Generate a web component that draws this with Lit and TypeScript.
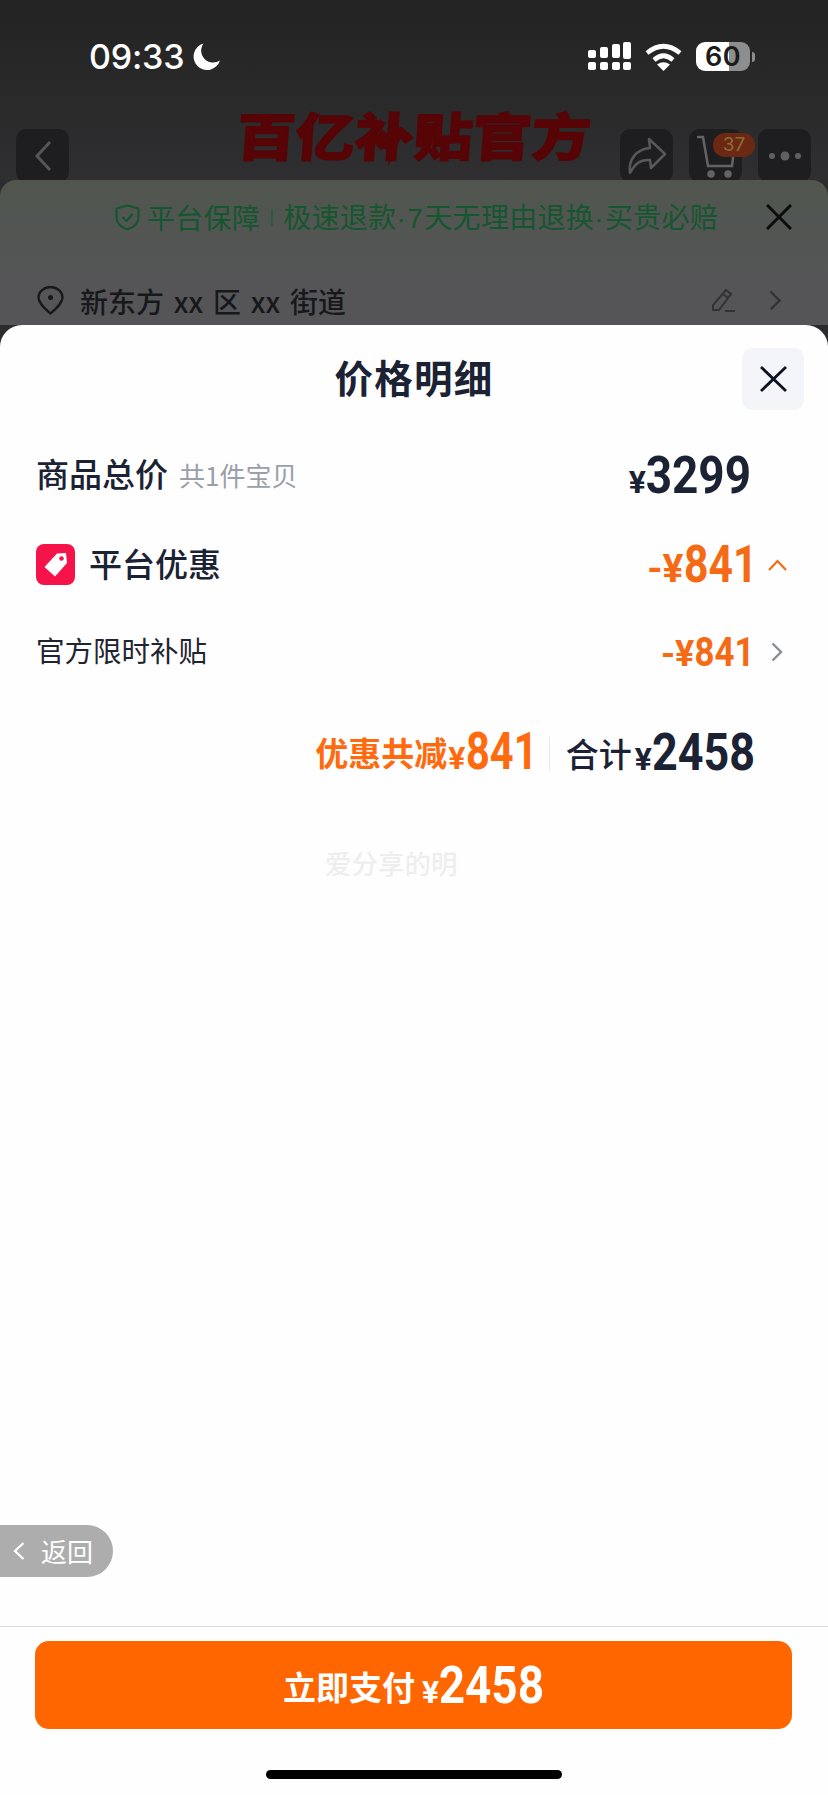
import { LitElement, html, css } from "lit";
import { customElement } from "lit/decorators.js";

@customElement("app-root")
export class AppRoot extends LitElement {
  static styles = css`
    :host { display: block; width: 828px; height: 1795px; position: relative; overflow: hidden;
      font-family: "Noto Sans CJK SC", "Liberation Sans", sans-serif; background: #2c2c2e; }
    svg { display: block; flex: none; }
    .top { height: 180px; overflow: hidden; background: linear-gradient(#232323, #2f2f31); }
    .status { height: 129px; box-sizing: border-box; padding: 42px 73px 0 89px; display: flex; justify-content: space-between; align-items: flex-start; color: #fff; }
    .left { display: flex; align-items: center; gap: 9px; height: 29px; }
    .time { font: 500 34px/29px Inter, sans-serif; letter-spacing: -0.2px; }
    .right { display: flex; align-items: center; }
    .wifi { margin-left: 14px; }
    .battery { margin-left: 14px; display: flex; align-items: center; gap: 2px; }
    .batt { width: 54px; height: 29px; border-radius: 9px; background: linear-gradient(90deg, #fff 61%, #8e8e8e 61%);
      color: #1b1b1b; font: 600 27px/29px Inter, sans-serif; text-align: center; letter-spacing: 0.5px; }
    .nub { width: 3px; height: 10px; border-radius: 0 3px 3px 0; background: #8e8e8e; }
    .nav { display: grid; grid-template-columns: 1fr auto 1fr; padding: 0 17px 0 16px; align-items: start; }
    .nbtn { width: 53px; height: 53px; border-radius: 10px; background: #1e1e20; display: flex; align-items: center; justify-content: center; position: relative; }
    .nav-right { display: flex; gap: 16px; justify-content: flex-end; }
    .logo { position: relative; margin-top: -26px; width: 354px; height: 62px; color: #560406; font: 900 59px/62px "Noto Sans CJK SC", sans-serif; white-space: nowrap; text-align: center; }
    .logo span { display: block; transform: skewX(-4deg) scaleY(0.87); -webkit-text-stroke: 1.5px #560406; }
    .bolt { position: absolute; left: 146px; top: 34px; }
    .badge { position: absolute; left: 24px; top: 4px; width: 42px; height: 24px; border-radius: 12px; background: #6b2812; color: #8d6a3a; font: 400 19px/24px Inter, sans-serif; text-align: center; }
    .under { height: 145px; border-radius: 16px 16px 0 0; overflow: hidden; background: linear-gradient(#50564e, #555557 70%); }
    .notice { height: 74px; display: flex; align-items: center; padding: 0 36px 0 115px; color: #14562f; font-size: 28px; line-height: 1; white-space: nowrap; letter-spacing: 0.3px; }
    .notice .shield { margin-right: 7px; }
    .bar { width: 2px; height: 17px; background: #2a5c40; margin: 0 10px 0 11px; }
    .dot { font-family: "Liberation Sans", sans-serif; letter-spacing: 1.5px; }
    .notice .x { margin-left: auto; }
    .addr { height: 71px; box-sizing: border-box; display: flex; align-items: center; padding: 22px 47px 0 37px; color: #17181c; font-size: 28px; font-weight: 500; white-space: pre; word-spacing: 3.5px; }
    .addr .pin { margin-right: 16px; }
    .addr .edit { margin-left: auto; margin-right: 33px; }
    .sheet { position: absolute; left: 0; right: 0; top: 325px; bottom: 0; display: flex; flex-direction: column; background: #fefefe; border-radius: 22px 22px 0 0; color: #1a2234; }
    .head { height: 105px; position: relative; text-align: center; font-size: 38.5px; font-weight: 700; line-height: 102px; letter-spacing: 1.2px; box-sizing: border-box; }
    .close { position: absolute; right: 24px; top: 23px; width: 62px; height: 62px; border-radius: 10px; background: #f3f5f8; display: flex; align-items: center; justify-content: center; }
    .row { display: flex; align-items: center; padding-left: 36px; }
    .r1 { height: 90px; padding-right: 77px; }
    .r2 { height: 90px; padding-right: 41px; }
    .r3 { height: 84px; padding-right: 45px; }
    .label { font-size: 33px; font-weight: 500; line-height: 1; white-space: nowrap; margin-bottom: 4px; }
    .sub { font-size: 26px; color: #9aa0a8; margin-left: 11px; line-height: 1; white-space: nowrap; }
    .reg { font-size: 28.5px; font-weight: 400; color: #1f2430; line-height: 1; margin-bottom: 4px; }
    .tag { margin-right: 14px; margin-bottom: 2px; }
    .amt { margin-left: auto; display: flex; align-items: baseline; line-height: 1; white-space: nowrap; }
    .num { font-family: Roboto, sans-serif; font-weight: 700; display: inline-block; transform-origin: right center; }
    .four { font-size: 51px; transform: scaleX(0.88); margin-left: -14px; }
    .three { font-size: 52px; transform: scaleX(0.82); margin-left: -15px; }
    .yen { font-family: Roboto, sans-serif; font-weight: 700; }
    .o { color: #f56a14; }
    .amt1 .yen { font-size: 32px; }
    .amt1 .num, .pay .num { transform: scaleX(0.9); margin-left: -12px; }
    .amt2 .yen { font-size: 39px; }
    .amt3 .yen { font-size: 36px; }
    .amt3 .num { font-size: 41px; transform: scaleX(0.85); margin-left: -10px; }
    .amt2 + svg { margin-left: 10px; }
    .amt3 + svg { margin-left: 16px; }
    .sum { height: 116px; display: flex; align-items: center; justify-content: flex-end; padding-right: 73px; line-height: 1; white-space: nowrap; }
    .t { vertical-align: 3px; }
    .sum .t { font-size: 33px; font-weight: 500; margin-right: 3px; }
    .sum .orange .t { font-weight: 700; margin-right: 1px; }
    .sum .yen { font-size: 32px; }
    .sum .three { transform: scaleX(0.8); margin-left: -17px; }
    .orange { color: #ff6a0e; }
    .div { width: 1px; height: 34px; background: #e8e8e8; margin: 4px 16px 0 11px; }
    .ghost { position: absolute; left: 325px; top: 525px; font-size: 26.5px; font-weight: 500; color: #eeeeee; line-height: 1; white-space: nowrap; }
    .back { position: absolute; left: 0; top: 1200px; width: 113px; height: 52px; border-radius: 0 26px 26px 0; background: #adadad; color: #fff; display: flex; align-items: center; padding-left: 13px; box-sizing: border-box; font-size: 26px; line-height: 1; gap: 16px; }
    .spacer { flex: 1; }
    .foot { border-top: 1px solid #d8d8d8; padding: 14px 36px 16px 35px; display: flex; flex-direction: column; align-items: center; }
    .pay { width: 100%; height: 88px; border-radius: 14px; background: #ff6600; color: #fff; display: flex; align-items: center; justify-content: center; line-height: 1; white-space: nowrap; }
    .pay .t { font-size: 33px; font-weight: 700; margin-right: 7px; }
    .pay .yen { font-size: 32px; }
    .home { width: 296px; height: 9px; border-radius: 5px; background: #000; margin-top: 41px; }
  `;

  render() {
    return html`
      <div class="top">
        <div class="status">
          <div class="left">
            <span class="time">09:33</span>
            <svg width="27" height="27" viewBox="0 0 27 27"><path fill="#fff" d="M10.5 0.5A13.5 13.5 0 1 0 27 17.5A13 13 0 0 1 18.5 19.5A12 12 0 0 1 10.5 0.5Z"/></svg>
          </div>
          <div class="right">
            <svg width="43" height="29" viewBox="0 0 43 29" fill="#fff">
              <rect x="0" y="8" width="8" height="8" rx="2"/><rect x="12" y="5" width="8" height="11" rx="2"/><rect x="24" y="2" width="8" height="14" rx="2"/><rect x="35" y="0" width="8" height="17" rx="2"/>
              <rect x="0" y="20" width="8" height="8" rx="2"/><rect x="12" y="20" width="8" height="8" rx="2"/><rect x="24" y="20" width="8" height="8" rx="2"/><rect x="35" y="20" width="8" height="8" rx="2"/>
            </svg>
            <svg class="wifi" width="37" height="28" viewBox="0 0 37 28" fill="none" stroke="#fff" stroke-width="4.6">
              <path d="M2 10Q18.5 -3.5 35 10"/><path d="M9 17Q18.5 8.500 28 17"/><path fill="#fff" stroke="none" d="M12 21.500Q18.500 17 25 21.500L18.500 28Z"/>
            </svg>
            <div class="battery"><div class="batt">60</div><div class="nub"></div></div>
          </div>
        </div>
        <div class="nav">
          <div class="nbtn">
            <svg width="18" height="32" viewBox="0 0 18 32" fill="none" stroke="#565658" stroke-width="3"><path d="M16 2L3 16L16 30"/></svg>
          </div>
          <div class="logo"><span>百亿补贴官方</span>
            <svg class="bolt" width="18" height="30" viewBox="0 0 18 30"><path fill="#560406" d="M2 0H18L5 30L7 12H0Z"/></svg>
          </div>
          <div class="nav-right">
            <div class="nbtn">
              <svg width="40" height="38" viewBox="0 0 40 38" fill="none" stroke="#58585a" stroke-width="2.500" stroke-linejoin="round"><path d="M22 2L38 17L24 31L23 23C13 22 8 27 3 36C1 22 10 12 23 11Z"/></svg>
            </div>
            <div class="nbtn">
              <svg width="40" height="44" viewBox="0 0 40 44" fill="none" stroke="#636365" stroke-width="2.500"><path d="M1 3H7L12 32H36L38 16"/><circle cx="15" cy="40" r="2.500" fill="#636365"/><circle cx="32" cy="40" r="2.500" fill="#636365"/></svg>
              <span class="badge">37</span>
            </div>
            <div class="nbtn">
              <svg width="34" height="12" viewBox="0 0 34 12" fill="#606062"><circle cx="4" cy="6" r="3"/><circle cx="17" cy="6" r="4.500"/><circle cx="30" cy="6" r="3"/></svg>
            </div>
          </div>
        </div>
      </div>
      <div class="under">
        <div class="notice">
          <svg class="shield" width="25" height="27" viewBox="0 0 25 27" fill="none" stroke="#14562f" stroke-width="2.200" stroke-linejoin="round"><path d="M12.500 1.500L23.500 4.500V13C23.500 19.500 18.500 23.500 12.500 25.500C6.500 23.500 1.500 19.500 1.500 13V4.500Z"/><path d="M7.500 13L11.500 17L17.500 10"/></svg>
          <span>平台保障</span><span class="bar"></span><span>极速退款<span class="dot">·7</span>天无理由退换<span class="dot">·</span>买贵必赔</span>
          <svg class="x" width="26" height="26" viewBox="0 0 26 26" stroke="#0c0c0c" stroke-width="3"><path d="M1 1L25 25M25 1L1 25"/></svg>
        </div>
        <div class="addr">
          <svg class="pin" width="27" height="29" viewBox="0 0 27 29" fill="none" stroke="#17181c" stroke-width="2.300"><path d="M13.500 27.500C6 21 1.500 16.500 1.500 11.500A12 10.500 0 0 1 25.500 11.500C25.500 16.500 21 21 13.500 27.500Z"/><circle cx="13.500" cy="11.500" r="2.500" fill="#17181c" stroke="none"/></svg>
          <span>新东方 xx 区 xx 街道</span>
          <svg class="edit" width="25" height="25" viewBox="0 0 25 25" fill="none" stroke="#333336" stroke-width="2"><path d="M15 2L20 6L8 22H2V17Z"/><path d="M12 6L17 10"/><path d="M14 23H24"/></svg>
          <svg width="12" height="21" viewBox="0 0 12 21" fill="none" stroke="#333336" stroke-width="2.300"><path d="M1.500 1.500L10.500 10.500L1.500 19.500"/></svg>
        </div>
      </div>
      <div class="sheet">
        <div class="head">价格明细
          <div class="close"><svg width="27" height="26" viewBox="0 0 27 26" stroke="#0d1220" stroke-width="2.800"><path d="M1 1L26 25M26 1L1 25"/></svg></div>
        </div>
        <div class="row r1">
          <span class="label">商品总价</span><span class="sub">共1件宝贝</span>
          <div class="amt amt1"><span class="yen">¥</span><span class="num four">3299</span></div>
        </div>
        <div class="row r2">
          <svg class="tag" width="39" height="41" viewBox="0 0 39 41"><rect width="39" height="41" rx="8" fill="#f5134a"/><path fill="#fff" d="M21 9.500L30 9L31 19L19 32.500L8.500 23Z"/><circle cx="25.500" cy="14.500" r="2.300" fill="#f5134a"/></svg>
          <span class="label">平台优惠</span>
          <div class="amt amt2 o"><span class="yen">-¥</span><span class="num three">841</span></div>
          <svg width="19" height="12" viewBox="0 0 19 12" fill="none" stroke="#f56a14" stroke-width="2.200"><path d="M1 11L9.500 2L18 11"/></svg>
        </div>
        <div class="row r3">
          <span class="reg">官方限时补贴</span>
          <div class="amt amt3 o"><span class="yen">-¥</span><span class="num three">841</span></div>
          <svg width="12" height="20" viewBox="0 0 12 20" fill="none" stroke="#8a8d93" stroke-width="2.400"><path d="M1.500 1.500L10 10L1.500 18.500"/></svg>
        </div>
        <div class="sum">
          <div class="orange"><span class="t">优惠共减</span><span class="yen">¥</span><span class="num three">841</span></div>
          <span class="div"></span>
          <div><span class="t">合计</span><span class="yen">¥</span><span class="num four">2458</span></div>
        </div>
        <div class="spacer"></div>
        <div class="foot">
          <div class="pay"><div><span class="t">立即支付</span><span class="yen">¥</span><span class="num four">2458</span></div></div>
          <div class="home"></div>
        </div>
        <div class="ghost">爱分享的明</div>
        <div class="back">
          <svg width="12" height="18" viewBox="0 0 12 18" fill="none" stroke="#fff" stroke-width="2.300"><path d="M10.500 1L2 9L10.500 17"/></svg>
          <span>返回</span>
        </div>
      </div>
    `;
  }
}
